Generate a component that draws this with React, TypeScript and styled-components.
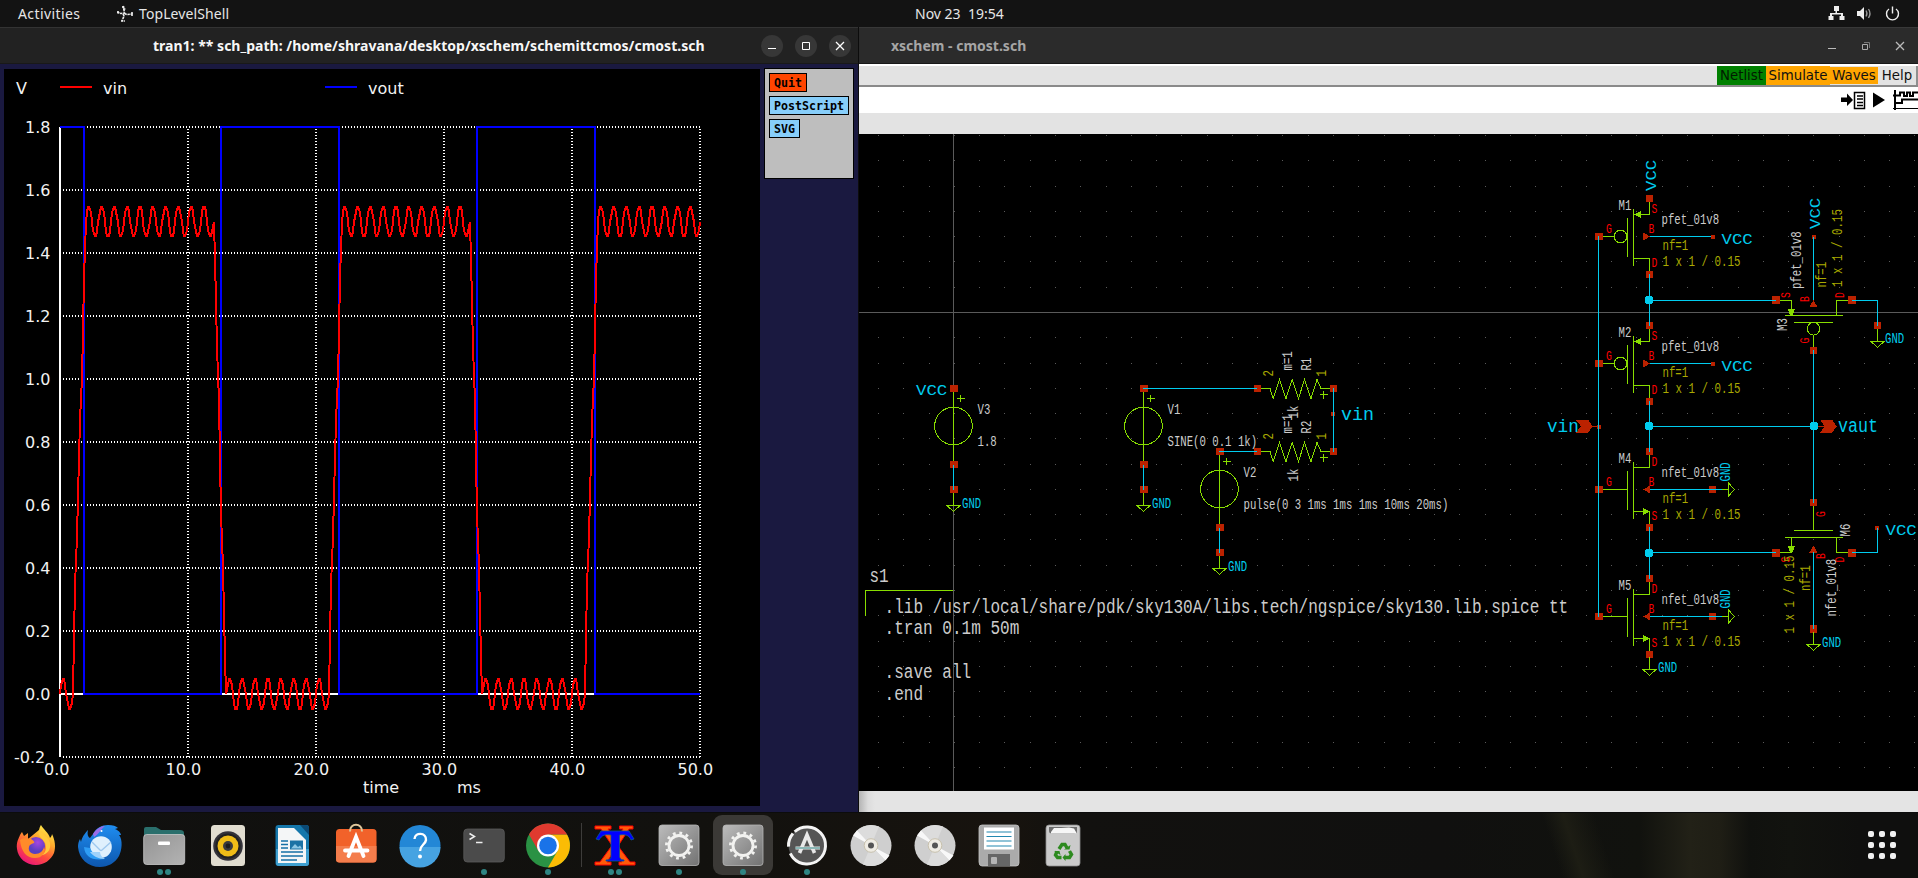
import React from "react";
import styled, { createGlobalStyle } from "styled-components";

const GlobalStyle = createGlobalStyle`
  * { box-sizing: border-box; }
  html, body { margin: 0; padding: 0; background: #000; }
  body { width: 1918px; height: 878px; overflow: hidden; }
`;

const UI = `"Noto Sans", "Open Sans", sans-serif`;

/* ---------- shell ---------- */

const Desktop = styled.div`
  width: 1918px;
  height: 878px;
  display: flex;
  flex-direction: column;
  background: #131313;
  font-family: ${UI};
  overflow: hidden;
`;

const TopBar = styled.header`
  height: 27px;
  flex: none;
  display: grid;
  grid-template-columns: 1fr auto 1fr;
  align-items: center;
  background: #131313;
  color: #e6e6e6;
  font-size: 14px;
  line-height: 26px;
  white-space: nowrap;
`;

const BarGroup = styled.div<{ $end?: boolean }>`
  display: flex;
  align-items: center;
  height: 26px;
  justify-content: ${(p) => (p.$end ? "flex-end" : "flex-start")};
  padding: ${(p) => (p.$end ? "0 17px 0 0" : "0 0 0 18px")};
  gap: ${(p) => (p.$end ? "11px" : "0")};
`;

const BarText = styled.span<{ $w: number; $ls?: number }>`
  display: inline-block;
  width: ${(p) => p.$w}px;
  letter-spacing: ${(p) => p.$ls ?? 0}px;
`;

const AppMark = styled.svg`
  width: 18px;
  height: 18px;
  margin: 0 5px 0 34px;
`;

const StatusIcon = styled.svg`
  width: 17px;
  height: 17px;
  display: block;
`;

const Workspace = styled.main`
  height: 785px;
  flex: none;
  display: flex;
`;

const Window = styled.section<{ $w: number; $edge?: boolean }>`
  width: ${(p) => p.$w}px;
  height: 785px;
  display: flex;
  flex-direction: column;
  border-right: ${(p) => (p.$edge ? "1px solid #0c0c0c" : "none")};
`;

const TitleBar = styled.div<{ $active?: boolean }>`
  height: 37px;
  flex: none;
  display: flex;
  align-items: center;
  background: ${(p) => (p.$active ? "#222222" : "#2b2b2b")};
  border-top: 1px solid ${(p) => (p.$active ? "#333333" : "#383838")};
  border-bottom: 1px solid #191919;
  color: ${(p) => (p.$active ? "#f7f7f7" : "#a6a6a6")};
  font-weight: 700;
  font-size: 14px;
`;

const Title = styled.span<{ $left: number; $w: number; $ls: number }>`
  margin-left: ${(p) => p.$left}px;
  width: ${(p) => p.$w}px;
  letter-spacing: ${(p) => p.$ls}px;
  white-space: nowrap;
  line-height: 34px;
`;

const Controls = styled.div<{ $gap: number; $right: number }>`
  margin-left: auto;
  margin-right: ${(p) => p.$right}px;
  display: flex;
  gap: ${(p) => p.$gap}px;
`;

const Control = styled.span<{ $disc?: boolean }>`
  width: 22px;
  height: 22px;
  border-radius: 50%;
  background: ${(p) => (p.$disc ? "#373737" : "transparent")};
  display: block;
  svg { display: block; width: 22px; height: 22px; }
`;

/* ---------- plot window ---------- */

const PlotBody = styled.div`
  flex: 1;
  display: flex;
  align-items: flex-start;
  gap: 4px;
  padding: 5px 4px 6px 4px;
  background: #1a1940;
`;

const PlotCanvas = styled.svg`
  width: 756px;
  height: 737px;
  display: block;
  background: #000;
  font-family: "DejaVu Sans", sans-serif;
  font-size: 16px;
  fill: #f2f2f2;
`;

const ButtonPanel = styled.div`
  width: 90px;
  height: 111px;
  margin-top: -1px;
  padding: 4px;
  display: flex;
  flex-direction: column;
  align-items: flex-start;
  gap: 4px;
  background: #bebebe;
  border: 1px solid #000;
`;

const PlotButton = styled.button<{ $hot?: boolean }>`
  height: 19px;
  padding: 1px 4px 0;
  border: 1px solid #000;
  border-radius: 0;
  background: ${(p) => (p.$hot ? "#ff4500" : "#87cefa")};
  color: #000;
  font: 700 11.63px/16px "DejaVu Sans Mono", monospace;
`;

/* ---------- schematic window ---------- */

const MenuStrip = styled.div`
  height: 23px;
  flex: none;
  display: flex;
  justify-content: flex-end;
  align-items: flex-start;
  background: #e3e3e3;
  border-top: 2px solid #ffffff;
  border-bottom: 2px solid #8a8a8a;
  font: 13.33px/19px "DejaVu Sans", sans-serif;
  color: #0c0c0c;
`;

const MenuItem = styled.span<{ $w: number; $bg?: string; $short?: boolean; $fg?: string }>`
  width: ${(p) => p.$w}px;
  height: ${(p) => (p.$short ? 17 : 19)}px;
  margin-top: ${(p) => (p.$short ? 1 : 0)}px;
  line-height: ${(p) => (p.$short ? 17 : 19)}px;
  text-align: center;
  background: ${(p) => p.$bg ?? "transparent"};
  color: ${(p) => p.$fg ?? "#111111"};
  white-space: nowrap;
`;

const MenuEnd = styled.i`
  width: 2px;
  height: 19px;
  background: #8f8f8f;
`;

const ToolStrip = styled.div`
  height: 26px;
  flex: none;
  display: flex;
  justify-content: flex-end;
  background: #fff;
  svg { display: block; width: 78px; height: 26px; }
`;

const TabStrip = styled.div`
  height: 21px;
  flex: none;
  background: #e3e3e3;
`;

const SheetCanvas = styled.svg`
  width: 1059px;
  height: 657px;
  flex: none;
  display: block;
  background: #000;
  font-family: "Liberation Mono", monospace;
`;

const StatusStrip = styled.div`
  height: 21px;
  flex: none;
  background: linear-gradient(90deg, #b4b4b4 0, #dcdcdc 9px, #e4e4e4 16px);
`;

/* ---------- dock ---------- */

const Dock = styled.footer`
  flex: 1;
  display: flex;
  align-items: flex-start;
  padding: 0 4px;
  background:
    linear-gradient(72deg, transparent 1486px, #1d1d14 1506px, transparent 1536px),
    linear-gradient(90deg, #10100f 0, #12110e 700px, #17130e 1010px, #12110f 1080px, #10100f 1440px, #11120e 1640px, #222117 1690px, #1f1e15 1720px, #10110e 1750px, #12130f 1790px, #0f0f0e 1860px);
  border-top: 1px solid #0c0c0c;
`;

const DockItem = styled.div<{ $on?: boolean }>`
  width: 60px;
  height: 60px;
  margin: 2px 2px 0;
  border-radius: 9px;
  background: ${(p) => (p.$on ? "#3b3936" : "transparent")};
  display: flex;
  flex-direction: column;
  align-items: center;
  padding-top: 8px;
  svg { width: 44px; height: 44px; display: block; flex: none; overflow: visible; }
`;

const Dots = styled.div`
  display: flex;
  gap: 2px;
  margin-top: 2px;
  i { width: 6px; height: 6px; border-radius: 50%; background: #2e8583; }
`;

const DockSep = styled.i`
  width: 1px;
  height: 44px;
  margin: 10px 1px 0;
  background: #3d3c3a;
`;

const AppGrid = styled.div`
  margin: 18px 18px 0 auto;
  display: grid;
  grid-template-columns: repeat(3, 6px);
  gap: 5px;
  i { width: 6px; height: 6px; border-radius: 2px; background: #f1f1f1; }
`;

/* ---------- waveform plot ---------- */

const X0 = 60;
const PX_MS = 12.8;
const yOf = (v: number) => 694 - v * 315;

const pulse = (t: number) => {
  const p = t % 20;
  if (p < 1) return 0;
  if (p < 2) return 3 * (p - 1);
  if (p <= 12) return 3;
  if (p < 13) return 3 * (13 - p);
  return 0;
};

const vinPoints = Array.from({ length: 501 }, (_, i) => {
  const t = i / 10;
  const v = (pulse(t) + 0.1 * Math.sin(2 * Math.PI * t)) / 2;
  return `${Math.round(X0 + t * PX_MS)},${Math.round(yOf(v))}`;
}).join(" ");

const voutPath = "M60 127H84V694H221V127H339V694H477V127H595V694H700";

const Plot = () => (
  <PlotCanvas viewBox="4 69 756 737">
    <g shapeRendering="crispEdges" fill="none" strokeWidth={2}>
      <g stroke="#fff" strokeDasharray="1 2">
        {[127, 190, 253, 316, 379, 442, 505, 568, 631, 757].map((y) => (
          <path key={y} d={`M63 ${y}H701`} />
        ))}
        {[188, 316, 444, 572, 700].map((x) => (
          <path key={x} d={`M${x} 129V758`} />
        ))}
      </g>
      <path d="M60 127V757M60 694H700" stroke="#fff" />
      <path d="M60 87H92" stroke="#f00" />
      <path d="M325 87H357" stroke="#00f" />
      <path d={voutPath} stroke="#00f" />
      <polyline points={vinPoints} stroke="#f00" />
    </g>
    <text x="16" y="94">V</text>
    <text x="103" y="94">vin</text>
    <text x="368" y="94">vout</text>
    {["1.8", "1.6", "1.4", "1.2", "1.0", "0.8", "0.6", "0.4", "0.2", "0.0"].map((s, i) => (
      <text key={s} x="25" y={133 + 63 * i}>{s}</text>
    ))}
    <text x="14" y="763">-0.2</text>
    <text x="44" y="775">0.0</text>
    {[10, 20, 30, 40, 50].map((n) => (
      <text key={n} x={37.5 + n * 12.8} y="775">{n}.0</text>
    ))}
    <text x="363" y="793">time</text>
    <text x="457" y="793">ms</text>
  </PlotCanvas>
);

/* ---------- schematic ---------- */

const WIRE = "#00ccee";
const SYM = "#88dd00";
const PIN = "#bb2200";
const TXT = "#cccccc";
const PARAM = "#aaaa00";
const PINTXT = "#ff0000";

type LabelProps = {
  x: number;
  y: number;
  s: string;
  c?: string;
  adv?: number;
  size?: number;
  up?: boolean;
};

/* x,y is the baseline start; `up` turns the label to read bottom-to-top */
const Label = ({ x, y, s, c = TXT, adv = 6.4, size = 15, up }: LabelProps) => (
  <text
    transform={`translate(${x} ${y})${up ? " rotate(-90)" : ""}`}
    fontSize={size}
    fill={c}
    textLength={s.length * adv}
    lengthAdjust="spacingAndGlyphs"
    xmlSpace="preserve"
  >
    {s}
  </text>
);

const Net = (p: LabelProps) => <Label c={WIRE} adv={10.4} {...p} />;
const Gnd = (p: Omit<LabelProps, "s">) => <Label c={WIRE} s="GND" {...p} />;
const PinName = (p: LabelProps) => <Label c={PINTXT} size={12} adv={5.8} {...p} />;

const Pad = ({ x, y, r = 3.6 }: { x: number; y: number; r?: number }) => (
  <rect x={x - r} y={y - r} width={2 * r} height={2 * r} fill={PIN} />
);

const Wire = ({ d }: { d: string }) => <path d={d} stroke={WIRE} fill="none" />;
const Sym = ({ d }: { d: string }) => <path d={d} stroke={SYM} fill="none" />;

const Node = ({ x, y }: { x: number; y: number }) => (
  <path
    d={`M${x - 4} ${y - 2.5}l1.5 -1.5h5l1.5 1.5v5l-1.5 1.5h-5l-1.5 -1.5z`}
    fill={WIRE}
  />
);

const GndMark = ({ x, y, from }: { x: number; y: number; from: number }) => (
  <Sym d={`M${x} ${from}V${y}M${x - 6.5} ${y}H${x + 6.5}L${x} ${y + 6}Z`} />
);

const Source = ({ x, y, name, value }: { x: number; y: number; name: string; value: string }) => (
  <g>
    <Sym d={`M${x} ${y}V${y + 76}M${x + 3} ${y + 10}h8M${x + 7} ${y + 6.5}v7`} />
    <circle cx={x} cy={y + 37.5} r="18.8" fill="none" stroke={SYM} />
    <Pad x={x + 0.5} y={y} />
    <Pad x={x + 0.5} y={y + 76} />
    <Pad x={x + 0.5} y={y + 101} />
    <GndMark x={x} y={y + 117} from={y + 104} />
    <Wire d={`M${x} ${y + 76}V${y + 101}`} />
    <Label x={x + 24} y={y + 25} s={name} />
    <Label x={x + 24} y={y + 57} s={value} />
    <Gnd x={x + 8.5} y={y + 119} />
  </g>
);

const Resistor = ({ y, name }: { y: number; name: string }) => (
  <g>
    <Sym
      d={`M1257 ${y}H1270L1273.2 ${y + 10}L1279.5 ${y - 9}L1286 ${y + 10}L1292.2 ${y - 9}L1298.5 ${y + 10}L1304.5 ${y - 9}L1311 ${y + 10}L1317 ${y - 9}L1321 ${y}H1333`}
    />
    <Sym d={`M1320 ${y + 6}h8M1323.5 ${y + 2.5}v8`} />
    <Pad x={1257.5} y={y} />
    <Pad x={1333.5} y={y} />
    <Label x={1273} y={y - 12} s="2" c={PARAM} up />
    <Label x={1326} y={y - 12} s="1" c={PARAM} up />
    <Label x={1292} y={y - 18} s="m=1" up />
    <Label x={1311} y={y - 18} s={name} up />
    <Label x={1298} y={y + 30} s="1k" up />
  </g>
);

const Fet = ({ y, name, p }: { y: number; name: string; p?: boolean }) => (
  <g>
    <Sym d={`M1627.5 ${y - 19}V${y + 20}M1633.5 ${y - 28}V${y + 29}`} />
    <Sym d={`M1649.5 ${y - 38}V${y - 22}H1633.5M1633.5 ${y + 22}H1649.5V${y + 38}`} />
    {p ? (
      <>
        <Sym d={`M1599 ${y}H1614`} />
        <circle cx="1620.5" cy={y} r="6.3" fill="none" stroke={SYM} />
        <path d={`M1634 ${y - 22}L1641 ${y - 25.5}V${y - 18.5}Z`} fill={SYM} />
        <path d={`M1643 ${y - 4}L1650 ${y}L1643 ${y + 4}Z`} fill={PIN} />
      </>
    ) : (
      <>
        <Sym d={`M1599 ${y}H1627`} />
        <path d={`M1650 ${y + 22}L1643 ${y + 18.5}V${y + 25.5}Z`} fill={SYM} />
        <path d={`M1650 ${y - 4}L1643 ${y}L1650 ${y + 4}Z`} fill={PIN} />
      </>
    )}
    <Pad x={1599} y={y} r={3.9} />
    <Pad x={1649.5} y={y - 38} />
    <Pad x={1649.5} y={y + 38} />
    <Label x={1618.5} y={y - 27} s={name} />
    <Label x={1661.5} y={y - 12.5} s={p ? "pfet_01v8" : "nfet_01v8"} />
    <Label x={1662.5} y={y + 13} s="nf=1" c={PARAM} />
    <Label x={1662.5} y={y + 29} s="1 x 1 / 0.15" c={PARAM} adv={6.5} />
    <PinName x={1606} y={y - 4} s="G" />
    <PinName x={1648.5} y={y - 4} s="B" />
    <PinName x={1651.5} y={y - 23.5} s={p ? "S" : "D"} />
    <PinName x={1651.5} y={y + 30.5} s={p ? "D" : "S"} />
    <Wire d={`M1649.5 ${y}H1713`} />
    {p ? (
      <>
        <Pad x={1713} y={y + 0.5} r={2} />
        <Net x={1721.5} y={y + 7} s="VCC" />
      </>
    ) : (
      <>
        <Pad x={1712.5} y={y} />
        <Sym d={`M1716 ${y}H1728.5M1728.5 ${y - 6.5}V${y + 6.5}L1734.5 ${y}Z`} />
        <Wire d={`M1709 ${y}H1722`} />
        <Gnd x={1730} y={y - 8} up />
      </>
    )}
  </g>
);

const gridDots: string[] = [];
for (let r = 0; r < 26; r++) {
  for (let c = 0; c < 42; c++) {
    const gx = Math.round(878 + 25.28 * c);
    const gy = Math.round(135 + 25.28 * r);
    gridDots.push(`M${gx} ${gy}h1v1h-1z`);
  }
}
const gridPath = gridDots.join("");

const netlistLines: [string, number][] = [
  [".lib /usr/local/share/pdk/sky130A/libs.tech/ngspice/sky130.lib.spice tt", 613],
  [".tran 0.1m 50m", 634],
  [".save all", 678],
  [".end", 700],
];

const Schematic = () => (
  <SheetCanvas viewBox="859 134 1059 657" shapeRendering="crispEdges">
    <path d={gridPath} fill="#5a5a5a" />
    <path d="M953.5 134V791M859 312.5H1918" stroke="#5a5a5a" />

    <Source x={953.5} y={388.5} name="V3" value="1.8" />
    <Source x={1143.5} y={388.5} name="V1" value="SINE(0 0.1 1k)" />
    <Source x={1219.5} y={451.5} name="V2" value="pulse(0 3 1ms 1ms 1ms 10ms 20ms)" />
    <Net x={916} y={395} s="VCC" />

    <Resistor y={388.5} name="R1" />
    <Resistor y={451.5} name="R2" />
    <Pad x={1333} y={414} r={2} />
    <Wire d="M1143 388.5H1257M1219 451.5H1257M1333.5 388V452" />
    <Net x={1341} y={420} s="vin" size={19} adv={11} />

    <Sym d="M953 590.5H865.5V616" />
    <Label x={869.5} y={581.5} s="s1" size={20} adv={9.6} />
    {netlistLines.map(([s, y]) => (
      <Label key={y} x={884.5} y={y} s={s} size={20} adv={9.63} />
    ))}

    <Fet y={236.5} name="M1" p />
    <Fet y={363.5} name="M2" p />
    <Fet y={489.5} name="M4" />
    <Fet y={616.5} name="M5" />
    <Net x={1656} y={191} s="VCC" up />
    <GndMark x={1649.5} y={669.5} from={657} />
    <Gnd x={1658} y={671.5} />

    {/* M3 lies on its side with the gate at the bottom */}
    <Sym d="M1776 300.5H1791.5V315M1785 315.5H1843M1836.5 315V300.5H1852M1794 322.5H1833M1813.5 335V351" />
    <circle cx="1813.5" cy="328.7" r="6.3" fill="none" stroke={SYM} />
    <path d="M1788 309H1795L1793 315H1790Z" fill={SYM} />
    <path d="M1813.5 300L1817.5 307H1809.5Z" fill={PIN} />
    <Pad x={1776} y={300} r={3.9} />
    <Pad x={1852} y={300} r={3.9} />
    <Pad x={1877.5} y={325.5} />
    <Pad x={1813.5} y={350.5} />
    <Pad x={1814} y={237} r={2} />
    <GndMark x={1877.5} y={341.5} from={329} />
    <Gnd x={1885} y={342.5} />
    <Net x={1820} y={229} s="VCC" up />
    <Label x={1801} y={289} s="pfet_01v8" up />
    <Label x={1825.5} y={287.5} s="nf=1" c={PARAM} up />
    <Label x={1842} y={287} s="1 x 1 / 0.15" c={PARAM} adv={6.5} up />
    <Label x={1787} y={331} s="M3" up />
    <PinName x={1789.5} y={298} s="S" up />
    <PinName x={1809} y={302} s="B" up />
    <PinName x={1843.5} y={298} s="D" up />
    <PinName x={1809} y={343.5} s="G" up />

    {/* M6 lies on its side with the gate at the top */}
    <Sym d="M1776 552.5H1791.5V538M1785 537.5H1843M1836.5 538V552.5H1852M1794 530.5H1833M1813.5 502V530" />
    <path d="M1788 546H1795L1793 552H1790Z" fill={SYM} />
    <path d="M1813.5 545.5L1817.5 552.5H1809.5Z" fill={PIN} />
    <Pad x={1776} y={553} r={3.9} />
    <Pad x={1852} y={553} r={3.9} />
    <Pad x={1877} y={528} r={2} />
    <Pad x={1813.5} y={502.5} />
    <Pad x={1813.5} y={629} />
    <GndMark x={1813.5} y={644.5} from={632} />
    <Gnd x={1822} y={646.5} />
    <Net x={1885.5} y={534.5} s="VCC" />
    <Label x={1850} y={536.5} s="M6" up />
    <PinName x={1825} y={517} s="G" up />
    <PinName x={1790} y={562.5} s="S" up />
    <PinName x={1825} y={559} s="B" up />
    <PinName x={1843.5} y={562.5} s="D" up />
    <Label x={1809.5} y={591} s="nf=1" c={PARAM} up />
    <Label x={1794} y={633.5} s="1 x 1 / 0.15" c={PARAM} adv={6.5} up />
    <Label x={1835.5} y={616.5} s="nfet_01v8" up />

    <path
      d="M1576 420H1588.3L1592.5 426.3L1588.3 432.7H1576L1581 426.3ZM1820.3 420H1832.3L1836.7 426.3L1832.3 432.7H1820.3L1824.5 426.3Z"
      fill={PIN}
    />
    <path d="M1592 426.5H1599M1817 426.5H1825" stroke={PIN} />
    <Pad x={1599} y={426.5} r={2} />
    <Net x={1547} y={432} s="vin" size={19} adv={10.6} />
    <Net x={1838} y={432} s="vaut" size={20} adv={10} />

    <Wire d="M1598.5 236V617M1649.5 274V326M1649.5 401V452M1649.5 527V579" />
    <Wire d="M1649 300.5H1776M1649 426.5H1813M1649 552.5H1776" />
    <Wire d="M1813.5 237V300M1813.5 350V503M1813.5 552V629" />
    <Wire d="M1852 300.5H1877.5V326M1852 552.5H1877.5V528" />
    <Node x={1649} y={300} />
    <Node x={1649} y={426} />
    <Node x={1649} y={553} />
    <Node x={1814} y={426} />
  </SheetCanvas>
);

/* ---------- dock artwork ---------- */

const Firefox = () => (
  <svg viewBox="0 0 44 44">
    <defs>
      <linearGradient id="ffa" x1=".8" y1="0" x2=".25" y2="1">
        <stop offset="0" stopColor="#fff44f" />
        <stop offset=".35" stopColor="#ffa72b" />
        <stop offset=".65" stopColor="#ff4d3d" />
        <stop offset="1" stopColor="#e8127c" />
      </linearGradient>
      <radialGradient id="ffb" cx=".6" cy=".3">
        <stop offset="0" stopColor="#a646e0" />
        <stop offset="1" stopColor="#5a3fc0" />
      </radialGradient>
    </defs>
    <path d="M25 7C26 3 27 2 27 2C29 6 35 10 36 15C38 13 38 11 38 11C41 17 42 24 40 30C37 37 30 42 22 42C12 42 4 35 3 26C2 19 5 15 6 12C7 10 8 9 8 9L10 13L14 10V16Z" fill="url(#ffa)" />
    <circle cx="22" cy="23" r="9" fill="url(#ffb)" />
    <path d="M6 17C10 14 14 16 17 16C20 18 21 19 20 20C17 21 15 22 15 24C14 27 16 31 21 31C26 31 29 28 30 24C32 30 28 35 21 35C12 35 7 28 6 17Z" fill="#ff8b2a" />
    <path d="M30 18C33 22 33 29 28 32C34 31 37 26 36 20C35 14 29 12 25 7C23 12 27 14 30 18Z" fill="#ffc93c" />
  </svg>
);

const Thunderbird = () => (
  <svg viewBox="0 0 44 44">
    <defs>
      <linearGradient id="tba" x1=".5" y1="0" x2=".5" y2="1">
        <stop offset="0" stopColor="#1f8df0" />
        <stop offset="1" stopColor="#0d56ad" />
      </linearGradient>
    </defs>
    <path d="M15 11C18 5 24 2 30 2C35 2 38 3 40 5L37 6C42 8 43 11 43 12L41 12C45 17 44 27 41 33C37 40 30 44 22 44C10 44 1 36 0 24C0 19 2 16 2 16L3 19C4 13 9 8 10 7C9 11 10 14 12 15Z" fill="url(#tba)" />
    <path d="M15 11C18 6 23 3 27 3C22 7 21 11 16 14Z" fill="#9b6be8" />
    <circle cx="23" cy="24" r="10.8" fill="#dff0fd" />
    <path d="M14 19L22 27Q23 28 24 27L33 19" fill="none" stroke="#9fc8ee" strokeWidth="1.4" />
    <path d="M6 24C7 34 14 38 27 36C20 33 15 32 12 25Z" fill="#2e9df5" />
    <path d="M12 29C15 33 20 36 27 36C24 34 22 32 22 29Z" fill="#9fd2fa" />
    <circle cx="23.5" cy="8" r="1" fill="#fff" />
  </svg>
);

const Files = () => (
  <svg viewBox="0 0 44 44">
    <defs>
      <linearGradient id="fia" x1="0" y1="0" x2="1" y2="1">
        <stop offset="0" stopColor="#949494" />
        <stop offset="1" stopColor="#b3b3b3" />
      </linearGradient>
    </defs>
    <path d="M2 13V6Q2 4 4 4H14L19 7H38Q42 7 42 10V15H2Z" fill="#2a6f6c" />
    <rect x="1.7" y="11.5" width="41" height="30" rx="3" fill="url(#fia)" stroke="#c9c9c9" strokeWidth=".8" />
    <rect x="16" y="18.5" width="12" height="3.4" rx="1" fill="#fff" />
  </svg>
);

const Speaker = () => (
  <svg viewBox="0 0 44 44">
    <rect x="5" y="2" width="34" height="41" rx="3.5" fill="#e1ddd0" />
    <circle cx="22" cy="23" r="14.8" fill="#34333a" />
    <circle cx="22" cy="23" r="12.6" fill="#222" />
    <circle cx="22" cy="23" r="10.5" fill="#f0bd18" />
    <circle cx="22" cy="23" r="5" fill="#3a3a3e" />
    <circle cx="22" cy="23" r="2.4" fill="#1c1c1e" />
  </svg>
);

const Writer = () => (
  <svg viewBox="0 0 44 44">
    <rect x="5.5" y="2" width="33.5" height="41" rx="3" fill="#1577ab" />
    <path d="M6 26H39V40Q39 43 36 43H9Q6 43 6 40Z" fill="#3fa0d0" />
    <path d="M8 5H24L36 17V40H8Z" fill="#f4f6f7" />
    <path d="M30 2H36Q39 2 39 5V12Z" fill="#0b4a75" />
    <path d="M11 18H18M11 21.5H18M11 25H18M11 29H33M11 33H33M11 37H27" stroke="#1570a6" strokeWidth="1.6" />
    <rect x="20" y="17.5" width="13" height="9" fill="#1b72a5" />
    <path d="M21 25.5L25 21L28 24L30 22.5L32 25.5Z" fill="#8cc6e4" />
  </svg>
);

const Software = () => (
  <svg viewBox="0 0 44 44">
    <rect x="2" y="6" width="40.5" height="33.5" rx="3.5" fill="#f1622a" />
    <path d="M2 23H42.5V36Q42.5 39.5 39 39.5H5.5Q2 39.5 2 36Z" fill="#f47d4c" />
    <path d="M16 8.5C15.5 -.5 28.5 -.5 28 8.500" fill="none" stroke="#e0c79b" strokeWidth="2" />
    <path d="M14.5 33L22 14L29.500 33M11 27.500H33.500" fill="none" stroke="#fff" strokeWidth="3.8" strokeLinecap="round" />
  </svg>
);

const Help = () => (
  <svg viewBox="0 0 44 44">
    <circle cx="22" cy="22.5" r="20.5" fill="#2387d6" />
    <path d="M1.5 24H42.5A20.5 20.5 0 0 1 1.5 24Z" fill="#46a3e2" />
    <path d="M16.5 16C17 9 28.5 9 28 17C27.5 21.5 22 22 22 28" fill="none" stroke="#fff" strokeWidth="2.4" />
    <circle cx="22" cy="33.5" r="2" fill="#fff" />
  </svg>
);

const Terminal = () => (
  <svg viewBox="0 0 44 44">
    <rect x="1.8" y="6" width="40.5" height="33" rx="3.5" fill="#4b4b4b" stroke="#5a5a5a" strokeWidth=".8" />
    <path d="M7.5 10.5L12.5 13.5L7.5 16.5M14 19.5H20.5" fill="none" stroke="#eee" strokeWidth="1.5" />
  </svg>
);

const Chrome = () => (
  <svg viewBox="0 0 44 44">
    <circle cx="22" cy="22.5" r="22" fill="#2a9244" />
    <path d="M22 11.5H41A22 22 0 0 1 22 44.5L31.5 28Z" fill="#fbbc05" />
    <path d="M3 11.4A22 22 0 0 1 41.1 11.5H22L12.5 28Z" fill="#e03a2f" />
    <circle cx="22" cy="22.5" r="11" fill="#fff" />
    <circle cx="22" cy="22.5" r="8.8" fill="#1a73e8" />
  </svg>
);

const XTerm = () => (
  <svg viewBox="0 0 44 44">
    <path d="M2 3H18V6H15L22.5 18L30 6H26.5V3H40V6H36L25 23L37 39H42V42H26V39H29L21.5 27L14 39H18V42H2V39H7L19 22.5L8 6H2Z" fill="#ff5a0a" stroke="#f00" strokeWidth="1" />
    <path d="M8 8H36L41 16L38 17C36 12 32 11 26.5 12V34Q27 37 31 37V38H13V37Q18 37 18 34V12C12 11 9 12 6 17L3 16Z" fill="#00f" stroke="#0b5c8f" strokeWidth=".8" />
  </svg>
);

const Gear = () => (
  <svg viewBox="0 0 44 44">
    <defs>
      <linearGradient id="gra" x1="0" y1="0" x2="1" y2="1">
        <stop offset="0" stopColor="#bcbcbc" />
        <stop offset="1" stopColor="#727272" />
      </linearGradient>
    </defs>
    <rect x="2" y="2" width="40" height="40.5" rx="3" fill="url(#gra)" stroke="#b5b5b5" strokeWidth=".8" />
    <circle cx="22" cy="22.5" r="10" fill="none" stroke="#f2f2f0" strokeWidth="2.8" />
    <circle cx="22" cy="22.5" r="12.6" fill="none" stroke="#f2f2f0" strokeWidth="2.8" strokeDasharray="2.8 3.797" />
  </svg>
);

const Updater = () => (
  <svg viewBox="0 0 44 44">
    <circle cx="22" cy="22.5" r="18.5" fill="#555" />
    <circle cx="22" cy="22.5" r="18.5" fill="none" stroke="#f4f4f4" strokeWidth="3" strokeDasharray="92 7 14 3.2" transform="rotate(-132 22 22.5)" />
    <path d="M14.5 30L22 12L29.5 30" fill="none" stroke="#e8e8e8" strokeWidth="3.6" />
    <path d="M10.5 25H35" stroke="#e8e8e8" strokeWidth="3" />
    <path d="M10.5 25H35" stroke="#2e8583" strokeWidth="1" />
  </svg>
);

const Disc = () => (
  <svg viewBox="0 0 44 44">
    <circle cx="22" cy="22.5" r="20.5" fill="#cfcfcf" />
    <path d="M22 22.5L7 8.5A20.5 20.5 0 0 1 30 3.6Z" fill="#dcdcdc" />
    <path d="M22 22.5L36 37.5A20.5 20.5 0 0 1 14 41.4Z" fill="#dcdcdc" />
    <path d="M22 22.5L4 12.5L8 7.5ZM22 22.5L40.5 32.5L36.5 37.5Z" fill="#f8f8f8" />
    <circle cx="22" cy="22.5" r="6.8" fill="#efece4" stroke="#c8c1ad" strokeWidth="1" />
    <circle cx="22" cy="22.5" r="3" fill="#555" />
  </svg>
);

const Floppy = () => (
  <svg viewBox="0 0 44 44">
    <path d="M5 2H39Q42 2 42 5V40Q42 43 39 43H5Q2 43 2 39V5Q2 2 5 2Z" fill="#ababab" stroke="#c4c4c4" strokeWidth=".8" />
    <rect x="7" y="4.5" width="30" height="22" fill="#fff" />
    <path d="M9.5 9H34.5M9.5 13.5H34.5M9.5 18H34.5M9.5 23H34.5" stroke="#2288b0" strokeWidth="1.2" />
    <path d="M11 31H33V43H11Z" fill="#666" />
    <rect x="14" y="34" width="6" height="7" rx="1" fill="#b5b5b5" />
  </svg>
);

const Trash = () => (
  <svg viewBox="0 0 44 44">
    <rect x="5" y="2" width="34" height="41" rx="3" fill="#cacaca" stroke="#8e8e8e" strokeWidth=".8" />
    <path d="M8 4H36V8Q36 10.5 33 10.5H11Q8 10.5 8 8Z" fill="#6c6c6c" />
    <path d="M10 9L13 5L20 5L28 4.5L33 5.5L35 9V10.5H10Z" fill="#f6f6f6" />
    <g fill="none" stroke="#2d8a1f" strokeWidth="3.4">
      <path d="M18 26L21 21.5H24L26 25" />
      <path d="M28.5 28L30.5 31.5L28.5 34.5H24" />
      <path d="M20.5 34.5H16.5L14.5 32L16 28.5" />
    </g>
    <path d="M23 26.5H28.5L29.5 22ZM24.5 31V38L21.5 34.5ZM13 28H18.5L19.5 32Z" fill="#2d8a1f" />
  </svg>
);

const dockBefore: [React.FC, number][] = [
  [Firefox, 0],
  [Thunderbird, 0],
  [Files, 2],
  [Speaker, 0],
  [Writer, 0],
  [Software, 0],
  [Help, 0],
  [Terminal, 1],
  [Chrome, 1],
];
const dockAfter: [React.FC, number, boolean?][] = [
  [XTerm, 2],
  [Gear, 1],
  [Gear, 1, true],
  [Updater, 1],
  [Disc, 0],
  [Disc, 0],
  [Floppy, 0],
  [Trash, 0],
];

const Launcher = ({ Icon, dots, on }: { Icon: React.FC; dots: number; on?: boolean }) => (
  <DockItem $on={on}>
    <Icon />
    <Dots>
      {Array.from({ length: dots }, (_, i) => (
        <i key={i} />
      ))}
    </Dots>
  </DockItem>
);

/* ---------- page ---------- */

export default function App() {
  return (
    <>
      <GlobalStyle />
      <Desktop>
        <TopBar>
          <BarGroup>
            <BarText $w={64} $ls={0.4}>Activities</BarText>
            <AppMark viewBox="0 0 18 18" fill="none" stroke="#eee" strokeWidth="1.6" strokeDasharray="2.4 .7">
              <path d="M7 1L8 5L8.5 8L5 8.5L1 7M8.5 8.5L11 9.5L17 9M7 9L8 11L6 16" />
              <path d="M6 2H9M2 6V9M16 7V11M5 16H9M7 4H10" />
            </AppMark>
            <BarText $w={92} $ls={0.1}>TopLevelShell</BarText>
          </BarGroup>
          <BarText $w={88}>Nov 23&nbsp; 19:54</BarText>
          <BarGroup $end>
            <StatusIcon viewBox="0 0 17 17" fill="#eee">
              <path d="M6 1h5v5H9v2h6v3h1.500v4h-5v-4H13V9.500H4V11h1.500v4h-5v-4H2V8h5.500V6H6z" />
            </StatusIcon>
            <StatusIcon viewBox="0 0 17 17">
              <path d="M1 6h3l4-4v13L4 11H1z" fill="#eee" />
              <path d="M10 5.5q2 3 0 6M12.5 4q3 4.5 0 9" fill="none" stroke="#999" strokeWidth="1.3" />
            </StatusIcon>
            <StatusIcon viewBox="0 0 17 17" fill="none" stroke="#eee" strokeWidth="1.4">
              <path d="M5 4A6 6 0 1 0 12 4M8.5 1.5V8.5" />
            </StatusIcon>
          </BarGroup>
        </TopBar>
        <Workspace>
          <Window $w={859} $edge>
            <TitleBar $active>
              <Title $left={153} $w={560} $ls={0.015}>
                tran1: ** sch_path: /home/shravana/desktop/xschem/schemittcmos/cmost.sch
              </Title>
              <Controls $gap={12} $right={7}>
                <Control $disc>
                  <svg viewBox="0 0 22 22"><path d="M7 13.5h8" stroke="#fff" /></svg>
                </Control>
                <Control $disc>
                  <svg viewBox="0 0 22 22"><path d="M7.5 7.5h7v7h-7z" fill="none" stroke="#fff" /></svg>
                </Control>
                <Control $disc>
                  <svg viewBox="0 0 22 22"><path d="M7 7l8 8M15 7l-8 8" stroke="#fff" strokeWidth="1.3" /></svg>
                </Control>
              </Controls>
            </TitleBar>
            <PlotBody>
              <Plot />
              <ButtonPanel>
                <PlotButton $hot>Quit</PlotButton>
                <PlotButton>PostScript</PlotButton>
                <PlotButton>SVG</PlotButton>
              </ButtonPanel>
            </PlotBody>
          </Window>
          <Window $w={1059}>
            <TitleBar>
              <Title $left={32} $w={140} $ls={0}>xschem - cmost.sch</Title>
              <Controls $gap={12} $right={7}>
                <Control>
                  <svg viewBox="0 0 22 22"><path d="M7 13.5h8" stroke="#bbb" /></svg>
                </Control>
                <Control>
                  <svg viewBox="0 0 22 22" fill="none" stroke="#aaa">
                    <path d="M7.5 9.5h5v5h-5z" />
                    <path d="M9 7.5h5.5V13" stroke="#777" />
                  </svg>
                </Control>
                <Control>
                  <svg viewBox="0 0 22 22"><path d="M7 7l8 8M15 7l-8 8" stroke="#bbb" strokeWidth="1.3" /></svg>
                </Control>
              </Controls>
            </TitleBar>
            <MenuStrip>
              <MenuItem $w={49} $bg="#008000" $fg="#001a00">Netlist</MenuItem>
              <MenuItem $w={64} $bg="#ffa500">Simulate</MenuItem>
              <MenuItem $w={48} $bg="#ffa500" $short>Waves</MenuItem>
              <MenuItem $w={38}>Help</MenuItem>
              <MenuEnd />
            </MenuStrip>
            <ToolStrip>
              <svg viewBox="1840 87 78 26">
                <path d="M1841 97.5h6v-4l6 6.5-6 6v-4h-6z" fill="#000" />
                <path d="M1854.5 92.5h10v16h-10zM1857 96h6M1857 99h6M1857 102.5h6M1857 105.5h6" fill="none" stroke="#000" strokeWidth="1.5" />
                <path d="M1873 92.5L1885 100L1873 107.5Z" fill="#000" />
                <path d="M1895 90V110M1893 95.5H1900V92.5H1904V96H1907V92.5H1910V96H1913V92.5H1918M1895 103H1902V99.5H1918" fill="none" stroke="#000" strokeWidth="2" />
                <path d="M1893 108.5H1918" stroke="#000" />
              </svg>
            </ToolStrip>
            <TabStrip />
            <Schematic />
            <StatusStrip />
          </Window>
        </Workspace>
        <Dock>
          {dockBefore.map(([Icon, dots], i) => (
            <Launcher key={i} Icon={Icon} dots={dots} />
          ))}
          <DockSep />
          {dockAfter.map(([Icon, dots, on], i) => (
            <Launcher key={i} Icon={Icon} dots={dots} on={on} />
          ))}
          <AppGrid>
            {Array.from({ length: 9 }, (_, i) => (
              <i key={i} />
            ))}
          </AppGrid>
        </Dock>
      </Desktop>
    </>
  );
}
